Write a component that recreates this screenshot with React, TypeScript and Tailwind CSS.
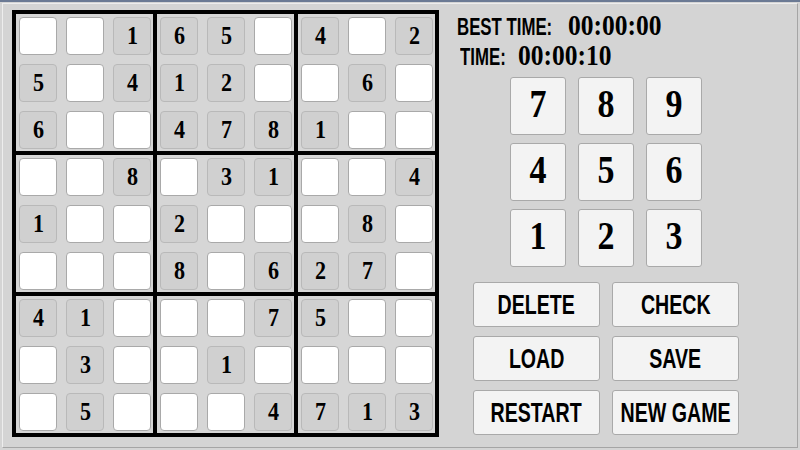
import React from "react";

const puzzle = [
  "001650402",
  "504120060",
  "600478100",
  "008031004",
  "100200080",
  "000806270",
  "410007500",
  "030010000",
  "050004713",
];

const serif = { fontFamily: '"Liberation Serif", "Times New Roman", serif' };
const sans = { fontFamily: '"Liberation Sans", Arial, sans-serif' };

function Cell({ v }: { v: string }) {
  const filled = v !== "0";
  return (
    <div
      className={
        filled
          ? "w-[38px] h-[38px] rounded-[4px] border border-[#b9b9b9] bg-[#d0d0d0] flex items-center justify-center"
          : "w-[38px] h-[38px] rounded-[4px] border border-[#a9a9a9] bg-white flex items-center justify-center"
      }
    >
      {filled && (
        <span
          className="inline-block text-[26px] leading-none font-bold text-black scale-x-[0.85]"
          style={serif}
        >
          {v}
        </span>
      )}
    </div>
  );
}

function Block({ b }: { b: number }) {
  const cells = [];
  for (let c = 0; c < 9; c++) {
    const r = Math.floor(b / 3) * 3 + Math.floor(c / 3);
    const col = (b % 3) * 3 + (c % 3);
    cells.push(<Cell key={c} v={puzzle[r][col]} />);
  }
  return (
    <div className="bg-[#d6d6d6] pt-[3px] pl-[3px] pr-[2px] pb-[2px] grid grid-cols-3 gap-[9px]">
      {cells}
    </div>
  );
}

function KeyBtn({ n }: { n: string }) {
  return (
    <div className="w-[56px] h-[58px] rounded-[3px] border border-[#a9a9a9] bg-[#f3f3f3] flex items-center justify-center pb-[4px]">
      <span
        className="inline-block text-[40px] leading-none font-bold text-black scale-x-[0.85]"
        style={serif}
      >
        {n}
      </span>
    </div>
  );
}

function ActBtn({ t }: { t: string }) {
  return (
    <div className="w-[127px] h-[45px] rounded-[3px] border border-[#a9a9a9] bg-[#f3f3f3] flex items-center justify-center">
      <span
        className="inline-block whitespace-nowrap text-[28px] leading-none font-bold text-black scale-x-[0.7]"
        style={sans}
      >
        {t}
      </span>
    </div>
  );
}

export default function App() {
  return (
    <div className="w-[800px] h-[450px] bg-[#d4d4d4] border-t-2 border-[#6b7a94] flex flex-col overflow-hidden">
      <div className="mx-[2px] mt-[1px] mb-[2px] flex-1 border border-t-[#ededed] border-l-[#ededed] border-r-[#a5a5a5] border-b-[#a5a5a5] flex">
        <div className="ml-[9px] mt-[6px] w-[427px] h-[427px] border-4 border-black bg-black grid grid-cols-3 gap-[4px]">
          {[0, 1, 2, 3, 4, 5, 6, 7, 8].map((b) => (
            <Block key={b} b={b} />
          ))}
        </div>
        <div className="ml-[18px] flex flex-col">
          <div className="mt-[6px] flex items-baseline leading-none">
            <div className="w-[111px]">
              <span
                className="inline-block whitespace-nowrap text-[24px] leading-none font-bold origin-left scale-x-[0.7]"
                style={sans}
              >
                BEST TIME:
              </span>
            </div>
            <span
              className="inline-block whitespace-nowrap text-[30px] leading-none font-bold origin-left scale-x-[0.85]"
              style={serif}
            >
              00:00:00
            </span>
          </div>
          <div className="flex items-baseline leading-none ml-[3px]">
            <div className="w-[58px]">
              <span
                className="inline-block whitespace-nowrap text-[24px] leading-none font-bold origin-left scale-x-[0.7]"
                style={sans}
              >
                TIME:
              </span>
            </div>
            <span
              className="inline-block whitespace-nowrap text-[30px] leading-none font-bold origin-left scale-x-[0.85]"
              style={serif}
            >
              00:00:10
            </span>
          </div>
          <div className="mt-[7px] ml-[53px] grid grid-cols-[56px_56px_56px] gap-x-[12px] gap-y-[8px]">
            {["7", "8", "9", "4", "5", "6", "1", "2", "3"].map((n) => (
              <KeyBtn key={n} n={n} />
            ))}
          </div>
          <div className="mt-[15px] ml-[16px] grid grid-cols-[127px_127px] gap-x-[12px] gap-y-[9px]">
            {["DELETE", "CHECK", "LOAD", "SAVE", "RESTART", "NEW GAME"].map((t) => (
              <ActBtn key={t} t={t} />
            ))}
          </div>
        </div>
      </div>
    </div>
  );
}
